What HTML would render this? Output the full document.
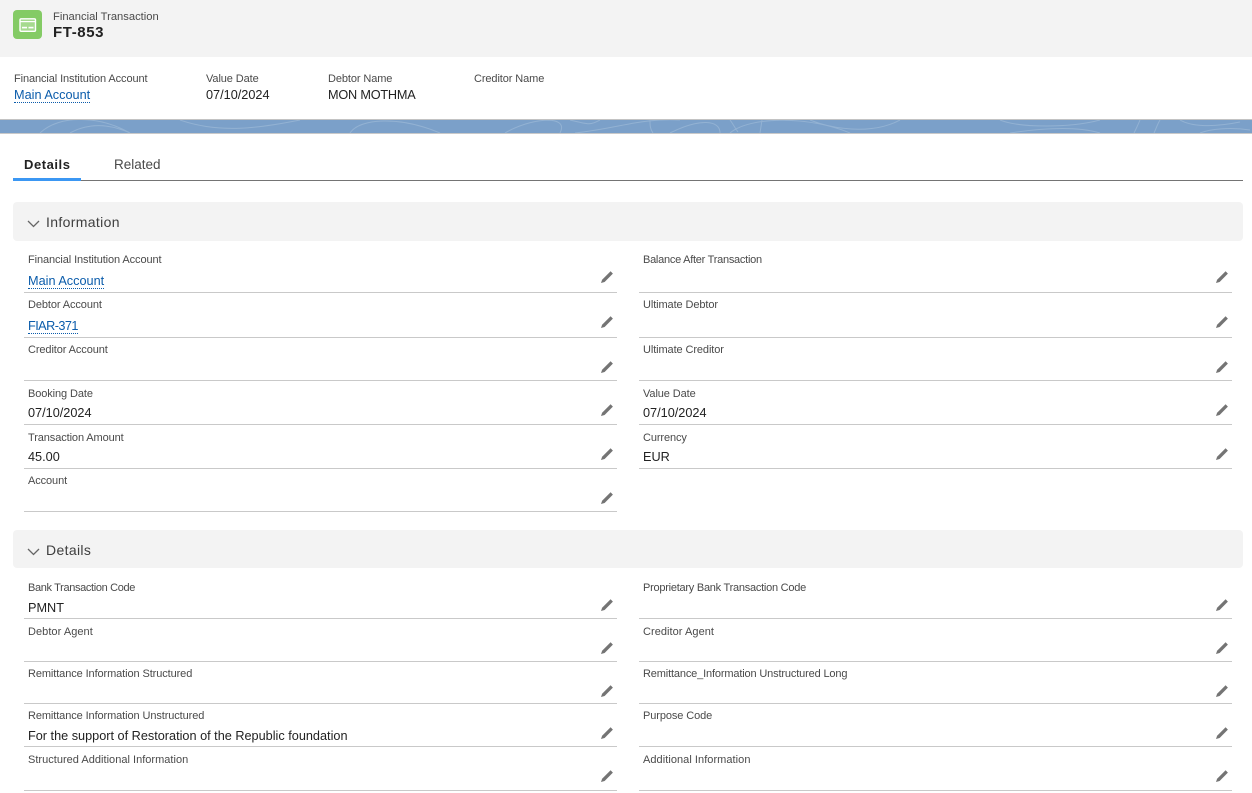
<!DOCTYPE html>
<html><head><meta charset="utf-8">
<style>
html,body{margin:0;padding:0;background:#fff}
#p{position:relative;width:1252px;height:793px;overflow:hidden;background:#fff;font-family:"Liberation Sans",sans-serif;color:#222}
#p div,#p a{position:absolute;white-space:nowrap}
.l{font-size:11px;line-height:14px;color:#4a4a4a;letter-spacing:-.1px;margin-top:1px}
.v{font-size:12.7px;line-height:16px;color:#222}
a{color:#0b5cab;text-decoration:none;border-bottom:1px dotted #0b5cab;font-size:12.7px;line-height:14px}
.r{height:1px;background:#c9c9c9;width:593px}
.s{left:13px;width:1230px;background:#f3f3f3;border-radius:4px}
.st{left:46px;font-size:14px;line-height:18px;color:#3e3e3e;letter-spacing:.35px}
svg{position:absolute}
.pen{width:14px;height:14px;fill:#747474}
</style></head><body><div id="p">
<svg width="0" height="0"><defs><symbol id="pn" viewBox="0 0 14 14"><path d="M10.600 1.300l2.300 2.300-8.300 8.400L1 13l1.100-3.300z"/></symbol></defs></svg>

<div style="left:0;top:0;width:1252px;height:57px;background:#f3f3f3"></div>
<div style="left:13px;top:10px;width:29px;height:29px;background:#84cb65;border-radius:4px"></div>
<svg style="left:19px;top:17px" width="18" height="16" viewBox="0 0 18 16"><rect x="1" y="1.800" width="15.500" height="12.500" rx="1.200" fill="#a6da8f" stroke="#fff" stroke-width="1.400"/><rect x="1" y="4" width="15.500" height="1.200" fill="#fff"/><rect x="3" y="9.800" width="5" height="1.600" fill="#fff"/><rect x="9.500" y="9.800" width="5" height="1.600" fill="#fff"/></svg>
<div style="left:53px;top:10px;font-size:11.200px;line-height:14px;color:#4a4a4a">Financial Transaction</div>
<div style="left:53px;top:23px;font-size:15px;line-height:19px;font-weight:bold;color:#222;letter-spacing:.6px">FT-853</div>

<div class="l" style="left:14px;top:71px">Financial Institution Account</div>
<a style="left:14px;top:88px">Main Account</a>
<div class="l" style="left:206px;top:71px">Value Date</div>
<div class="v" style="left:206px;top:87px">07/10/2024</div>
<div class="l" style="left:328px;top:71px">Debtor Name</div>
<div class="v" style="left:328px;top:87px;letter-spacing:-.2px">MON MOTHMA</div>
<div class="l" style="left:474px;top:71px">Creditor Name</div>

<div style="left:0;top:119px;width:1252px;height:15px;background:#7ba0c9;border-top:1px solid #c3c3c3;border-bottom:1px solid #c9c9c9;box-sizing:border-box"></div>
<svg style="left:0;top:120px" width="1252" height="13" viewBox="0 0 1252 13" fill="none" stroke="#93b2d3" stroke-width="1"><path d="M40 13C60-6 100-4 130 13M70 13C90 2 110 4 130 13M180 0C220 14 260 8 300 0M350 13C360-2 400-4 440 13M505 13C530-2 570-6 560 13M570 0C590 5 590 5 600 0M575 13C620 8 640-2 680 0M650 0c0 5 0 9 3 13M730 13C750-4 810-4 850 13M670 13C700-2 720 0 720 13M730 0c3 4 5 8 8 12M762 0l-2 13M810 0c20 8 60 16 90 0M1000 0c20 8 70 8 100 0M1010 13c40-6 70-6 90 0M1140 0c-2 5-4 9-6 13M1160 0c-3 5-4 9-6 13M1180 0c10 6 30 8 60 2M1200 13c10-4 30-6 50-3"/></svg>

<div style="left:24px;top:156px;font-size:13px;line-height:17px;font-weight:bold;color:#222;letter-spacing:.55px">Details</div>
<div style="left:114px;top:156px;font-size:13.500px;line-height:17px;color:#4a4a4a">Related</div>
<div style="left:13px;top:180px;width:1230px;height:1px;background:#747474"></div>
<div style="left:13px;top:178px;width:68px;height:3px;background:#3b97f3"></div>

<div class="s" style="top:202px;height:39px"></div>
<svg style="left:27px;top:220px" width="13" height="8" viewBox="0 0 13 8" fill="none" stroke="#666" stroke-width="1.300"><path d="M1 1l5.500 5.500L12 1"/></svg>
<div class="st" style="top:213px">Information</div>

<div class="l" style="left:28px;top:252px">Financial Institution Account</div>
<a style="left:28px;top:274px">Main Account</a>
<div class="r" style="left:24px;top:292px"></div>
<svg class="pen" style="left:600px;top:270px"><use href="#pn"/></svg>
<div class="l" style="left:643px;top:252px;letter-spacing:-.26px">Balance After Transaction</div>
<div class="r" style="left:639px;top:292px"></div>
<svg class="pen" style="left:1215px;top:270px"><use href="#pn"/></svg>

<div class="l" style="left:28px;top:297px">Debtor Account</div>
<a style="left:28px;top:319px;letter-spacing:-.55px">FIAR-371</a>
<div class="r" style="left:24px;top:337px"></div>
<svg class="pen" style="left:600px;top:315px"><use href="#pn"/></svg>
<div class="l" style="left:643px;top:297px">Ultimate Debtor</div>
<div class="r" style="left:639px;top:337px"></div>
<svg class="pen" style="left:1215px;top:315px"><use href="#pn"/></svg>

<div class="l" style="left:28px;top:342px">Creditor Account</div>
<div class="r" style="left:24px;top:380px"></div>
<svg class="pen" style="left:600px;top:360px"><use href="#pn"/></svg>
<div class="l" style="left:643px;top:342px">Ultimate Creditor</div>
<div class="r" style="left:639px;top:380px"></div>
<svg class="pen" style="left:1215px;top:360px"><use href="#pn"/></svg>

<div class="l" style="left:28px;top:386px">Booking Date</div>
<div class="v" style="left:28px;top:405px">07/10/2024</div>
<div class="r" style="left:24px;top:424px"></div>
<svg class="pen" style="left:600px;top:403px"><use href="#pn"/></svg>
<div class="l" style="left:643px;top:386px">Value Date</div>
<div class="v" style="left:643px;top:405px">07/10/2024</div>
<div class="r" style="left:639px;top:424px"></div>
<svg class="pen" style="left:1215px;top:403px"><use href="#pn"/></svg>

<div class="l" style="left:28px;top:430px">Transaction Amount</div>
<div class="v" style="left:28px;top:449px">45.00</div>
<div class="r" style="left:24px;top:468px"></div>
<svg class="pen" style="left:600px;top:447px"><use href="#pn"/></svg>
<div class="l" style="left:643px;top:430px">Currency</div>
<div class="v" style="left:643px;top:449px">EUR</div>
<div class="r" style="left:639px;top:468px"></div>
<svg class="pen" style="left:1215px;top:447px"><use href="#pn"/></svg>

<div class="l" style="left:28px;top:473px">Account</div>
<div class="r" style="left:24px;top:511px"></div>
<svg class="pen" style="left:600px;top:491px"><use href="#pn"/></svg>

<div class="s" style="top:530px;height:38px"></div>
<svg style="left:27px;top:548px" width="13" height="8" viewBox="0 0 13 8" fill="none" stroke="#666" stroke-width="1.300"><path d="M1 1l5.500 5.500L12 1"/></svg>
<div class="st" style="top:541px">Details</div>

<div class="l" style="left:28px;top:580px;letter-spacing:-.35px">Bank Transaction Code</div>
<div class="v" style="left:28px;top:600px">PMNT</div>
<div class="r" style="left:24px;top:618px"></div>
<svg class="pen" style="left:600px;top:598px"><use href="#pn"/></svg>
<div class="l" style="left:643px;top:580px;letter-spacing:-.25px">Proprietary Bank Transaction Code</div>
<div class="r" style="left:639px;top:618px"></div>
<svg class="pen" style="left:1215px;top:598px"><use href="#pn"/></svg>

<div class="l" style="left:28px;top:624px;letter-spacing:.05px">Debtor Agent</div>
<div class="r" style="left:24px;top:661px"></div>
<svg class="pen" style="left:600px;top:641px"><use href="#pn"/></svg>
<div class="l" style="left:643px;top:624px;letter-spacing:.05px">Creditor Agent</div>
<div class="r" style="left:639px;top:661px"></div>
<svg class="pen" style="left:1215px;top:641px"><use href="#pn"/></svg>

<div class="l" style="left:28px;top:666px">Remittance Information Structured</div>
<div class="r" style="left:24px;top:703px"></div>
<svg class="pen" style="left:600px;top:684px"><use href="#pn"/></svg>
<div class="l" style="left:643px;top:666px;letter-spacing:-.15px">Remittance_Information Unstructured Long</div>
<div class="r" style="left:639px;top:703px"></div>
<svg class="pen" style="left:1215px;top:684px"><use href="#pn"/></svg>

<div class="l" style="left:28px;top:708px">Remittance Information Unstructured</div>
<div class="v" style="left:28px;top:728px">For the support of Restoration of the Republic foundation</div>
<div class="r" style="left:24px;top:746px"></div>
<svg class="pen" style="left:600px;top:726px"><use href="#pn"/></svg>
<div class="l" style="left:643px;top:708px">Purpose Code</div>
<div class="r" style="left:639px;top:746px"></div>
<svg class="pen" style="left:1215px;top:726px"><use href="#pn"/></svg>

<div class="l" style="left:28px;top:752px;letter-spacing:.02px">Structured Additional Information</div>
<div class="r" style="left:24px;top:790px"></div>
<svg class="pen" style="left:600px;top:769px"><use href="#pn"/></svg>
<div class="l" style="left:643px;top:752px;letter-spacing:.05px">Additional Information</div>
<div class="r" style="left:639px;top:790px"></div>
<svg class="pen" style="left:1215px;top:769px"><use href="#pn"/></svg>
</div></body></html>
